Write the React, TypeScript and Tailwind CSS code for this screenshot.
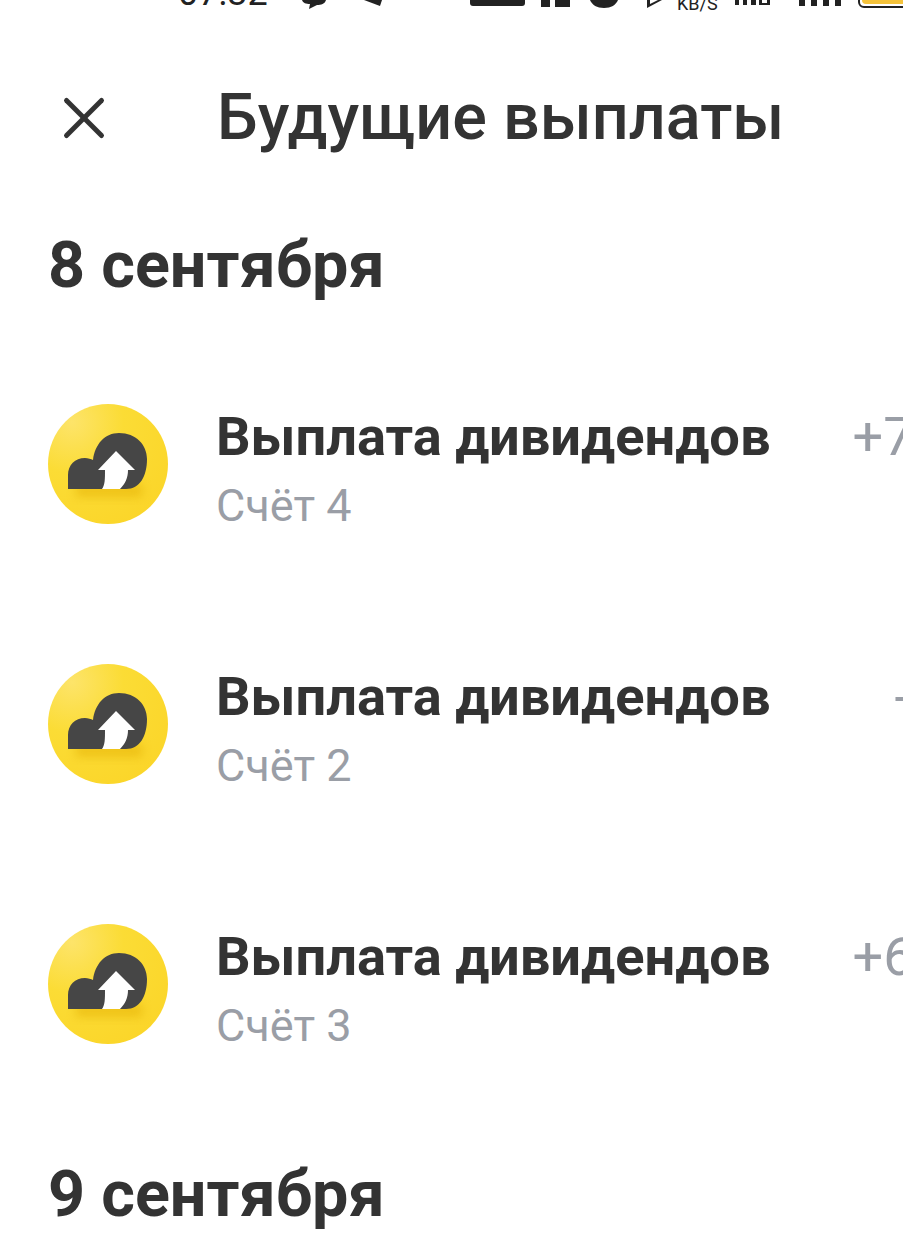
import { X } from 'lucide-react';

const font = "font-['Roboto','Liberation_Sans',sans-serif]";

const DividendIcon = () => (
  <svg width="120" height="120" viewBox="0 0 120 120" className="shrink-0">
    <defs>
      <radialGradient id="coin" cx="0.2" cy="0.15" r="0.95">
        <stop offset="0" stopColor="#fde46a" />
        <stop offset="0.45" stopColor="#fbdc35" />
        <stop offset="1" stopColor="#fbd62a" />
      </radialGradient>
      <filter id="soft" x="-30%" y="-60%" width="160%" height="220%">
        <feGaussianBlur stdDeviation="5" />
      </filter>
      <clipPath id="disc">
        <circle cx="60" cy="60" r="60" />
      </clipPath>
    </defs>
    <circle cx="60" cy="60" r="60" fill="url(#coin)" />
    <g clipPath="url(#disc)">
      <rect x="28" y="80" width="66" height="13" fill="#e2ac00" opacity="0.5" filter="url(#soft)" />
    </g>
    <path
      d="M20 85 V71 C20 61 27 54 37 54 C40 54 43 55 45 56 C47 40 57 29 71 29 C88 29 99 41 99 55 C99 72 92 85 78 85 Z"
      fill="#464646"
    />
    <path
      d="M50 66 L68 47 L87 66 H80 C80 74 77 80 72 85 H54 C57 81 57 75 57 66 Z"
      fill="#ffffff"
    />
  </svg>
);

const Row = ({ account, amount, gap }: { account: string; amount: string; gap: string }) => (
  <div className="flex items-center h-[260px] pl-12 whitespace-nowrap">
    <DividendIcon />
    <div className="ml-[49px] pt-[10px] -translate-x-px">
      <div className="flex">
        <span className="text-[54.2px] leading-[60px] font-bold text-[#333333]">Выплата дивидендов</span>
        <span className={`text-[54px] leading-[60px] text-[#9a9ea6] ${gap}`}>{amount}</span>
      </div>
      <div className="text-[45px] leading-[50px] mt-[14px] text-[#9a9ea6]">{account}</div>
    </div>
  </div>
);

export default function App() {
  return (
    <div className={`${font} relative w-[903px] h-[1258px] overflow-hidden bg-white`}>
      {/* status bar, mostly cropped off the top of the shot */}
      <div className="absolute top-[-25px] left-[178px] text-[36px] leading-[36px] text-[#222222]">07:32</div>
      <div className="absolute top-[-3px] left-[677px] text-[18px] leading-[14px] text-[#222222]">KB/S</div>
      <svg width="903" height="14" viewBox="0 0 903 14" className="absolute top-0 left-0" fill="#222222">
        <path d="M302 0 H326 C325 4 321 5 317 5 L309 9 L310 4 C306 4 303 3 302 0 Z" />
        <path d="M364 0 H382 L380 6 Z" />
        <rect x="470" y="-4" width="55" height="10" rx="3" />
        <rect x="541" y="0" width="9" height="7" />
        <rect x="555" y="0" width="15" height="7" />
        <path d="M590 0 H618 C616 5 611 8 604 8 C597 8 592 5 590 0 Z" />
        <path d="M647 0 H650 V4 L658 0 H662 L647 8 Z" />
        <rect x="735" y="0" width="4" height="5" />
        <rect x="743" y="0" width="4" height="5" />
        <rect x="751" y="0" width="5" height="5" />
        <path fillRule="evenodd" d="M759 0 H770 V5 H759 Z M762 0 V3 H767 V0 Z" />
        <rect x="799" y="0" width="6" height="6" />
        <rect x="811" y="0" width="6" height="6" />
        <rect x="823" y="0" width="6" height="6" />
        <rect x="835" y="0" width="6" height="6" />
      </svg>
      <div className="absolute top-[-14px] left-[858px] w-[60px] h-[22px] rounded-md border-2 border-[#222222] bg-white p-[2px]">
        <div className="h-full rounded-sm bg-[#f5c33b]" />
      </div>

      <header className="flex items-center h-[236px] pl-[49px]">
        <X size={70} strokeWidth={1.7} className="text-[#333333] shrink-0" />
        <h1 className="ml-[98px] text-[64.7px] font-medium text-[#333333] whitespace-nowrap">Будущие выплаты</h1>
      </header>
      <h2 className="pl-[48px] -mt-[6px] text-[64.7px] leading-[70px] font-bold text-[#333333]">8 сентября</h2>
      <div className="mt-[34px]">
        <Row account="Счёт 4" amount="+7" gap="ml-[82px]" />
        <Row account="Счёт 2" amount="-" gap="ml-[124px]" />
        <Row account="Счёт 3" amount="+6" gap="ml-[82px]" />
      </div>
      <h2 className="pl-[48px] mt-[45px] text-[64.7px] leading-[70px] font-bold text-[#333333]">9 сентября</h2>
    </div>
  );
}
